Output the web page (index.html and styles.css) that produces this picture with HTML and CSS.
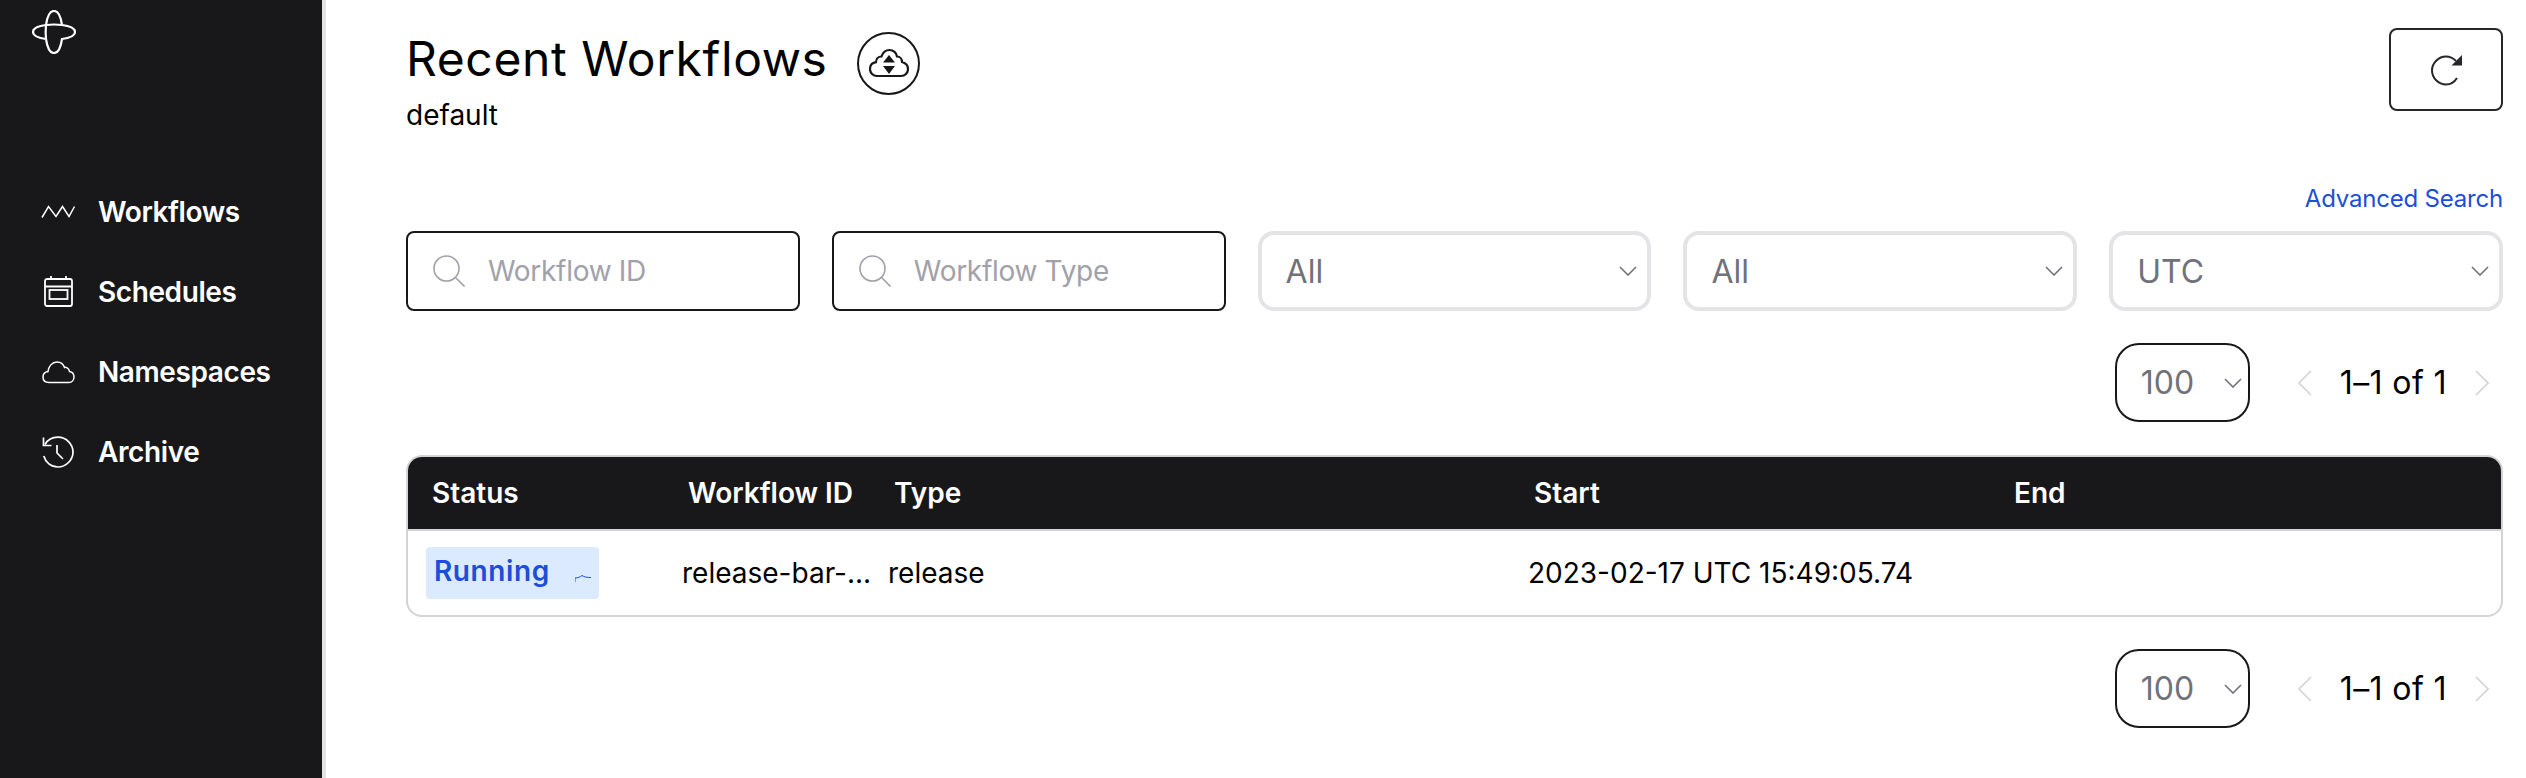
FILE: index.html
```html
<!doctype html>
<html lang="en">
    <head>
        <meta charset="utf-8" />
        <title>Recent Workflows</title>
        <link rel="stylesheet" href="styles.css">
    </head>
    <body>
        <svg class="sprites" width="0" height="0">
            <symbol id="chevron-down" viewBox="0 0 18 10">
                <path d="M1 1l8 8 8-8" fill="none" stroke="currentColor" stroke-width="1.6" />
            </symbol>
            <symbol id="search" viewBox="0 0 32 32">
                <circle cx="13.5" cy="13.5" r="12.5" fill="none" stroke="currentColor" stroke-width="1.6" />
                <path d="M22.5 22.5l9 9" fill="none" stroke="currentColor" stroke-width="1.6" />
            </symbol>
        </svg>

        <div class="app">
            <nav class="sidebar">
                <svg class="sidebar__logo" viewBox="32 10 44 44" fill="none" stroke="#fff" stroke-width="2.2">
                    <path d="M54 11C59 11 61 18 62 25C70 26 75 28 75 32C75 36 70 38 62 39C61 46 59 53 54 53C49 53 47 46 46 39C38 38 33 36 33 32C33 28 38 26 46 25C47 18 49 11 54 11Z" />
                    <path d="M46 39C45.5 34 45.5 30 46 25C51 24.4 57 24.4 62 25" />
                </svg>
                <ul class="sidebar__menu">
                    <li class="sidebar__item">
                        <svg class="sidebar__icon" viewBox="0 0 32 32" fill="none" stroke="#fff" stroke-width="1.5">
                            <path d="M0 21.5L6.5 10.5L14 20.5L20.5 10.5L27 20.5L32.5 10.5" />
                        </svg>
                        Workflows
                    </li>
                    <li class="sidebar__item">
                        <svg class="sidebar__icon" viewBox="0 0 32 32" fill="none" stroke="#fff" stroke-width="1.8">
                            <rect x="3" y="3" width="27" height="27" rx="2" />
                            <rect x="7.500" y="14" width="18" height="9" />
                            <path d="M3 10.500H30M9 0V3M24 0V3" />
                        </svg>
                        Schedules
                    </li>
                    <li class="sidebar__item">
                        <svg class="sidebar__icon" viewBox="0 0 32 32" fill="none" stroke="#fff" stroke-width="1.5">
                            <path d="M7 26.500C3 26.500 1 24 1 21C1 18 3 16 6 15.500C6.500 10.500 10 6 15 6C19 6 21.500 8.500 22.500 11.500C23.500 11 27 11.500 27.500 15.500C30 16 32 18 32 21C32 24 30 26.500 27 26.500Z" />
                        </svg>
                        Namespaces
                    </li>
                    <li class="sidebar__item">
                        <svg class="sidebar__icon" viewBox="0 0 32 32" fill="none" stroke="#fff" stroke-width="1.7">
                            <path d="M3 8.500C5.500 4 10 1.200 16 1.200C24 1.200 31 8 31 16C31 24 24 31 16 31C9 31 3.500 26.500 1.800 20" />
                            <path d="M1.500 1.500V9.500H9.500M15 9V17L21 23" />
                        </svg>
                        Archive
                    </li>
                </ul>
            </nav>

            <main class="content">
                <header class="page-header">
                    <div>
                        <div class="page-header__title">
                            <h1>Recent Workflows</h1>
                            <span class="cloud-button">
                                <svg viewBox="0 0 40 30" width="40" height="30" fill="none" stroke="#18181b" stroke-width="2.2">
                                    <path d="M8 28C4 28 1 25 1 21C1 17.500 3.500 14.800 7 14.200C7 10.500 9.500 8.500 12.500 8.500C14 4 17 2 20.500 2C24.500 2 27.500 5 28 8.500C31 8.500 33 11 33 14C36.500 15 39 17.500 39 21C39 25 36 28 32 28Z" />
                                    <path d="M20 7L26 14.500H14ZM20 26L26 18H14Z" fill="#18181b" stroke="none" />
                                </svg>
                            </span>
                        </div>
                        <p class="page-header__namespace">default</p>
                    </div>
                    <span class="refresh-button">
                        <svg viewBox="0 0 32 32" width="32" height="32" fill="none" stroke="#27272a" stroke-width="2">
                            <path d="M27 24C24.500 28 20.500 30.500 16 30.500C8.500 30.500 2 24 2 16.500C2 9 8.500 2.500 16 2.500C20 2.500 23.500 4.500 26 7" />
                            <path d="M32 1V11.500H21.500Z" fill="#27272a" stroke="none" />
                        </svg>
                    </span>
                </header>

                <div class="advanced-link">Advanced Search</div>

                <div class="filters">
                    <label class="search-box">
                        <svg class="search-box__icon"><use href="#search" /></svg>
                        <input class="search-box__input" placeholder="Workflow ID" />
                    </label>
                    <label class="search-box">
                        <svg class="search-box__icon"><use href="#search" /></svg>
                        <input class="search-box__input" placeholder="Workflow Type" />
                    </label>
                    <div class="select-box">All<svg class="chevron"><use href="#chevron-down" /></svg></div>
                    <div class="select-box">All<svg class="chevron"><use href="#chevron-down" /></svg></div>
                    <div class="select-box">UTC<svg class="chevron"><use href="#chevron-down" /></svg></div>
                </div>

                <div class="pagination">
                    <div class="page-size">100<svg class="chevron"><use href="#chevron-down" /></svg></div>
                    <svg class="page-arrow" viewBox="0 0 14 26"><path d="M13 1L1 13l12 12" /></svg>
                    <span class="page-label">1–1 of 1</span>
                    <svg class="page-arrow" viewBox="0 0 14 26"><path d="M1 1l12 12L1 25" /></svg>
                </div>

                <table class="workflow-table">
                    <colgroup>
                        <col class="col-status" />
                        <col class="col-id" />
                        <col class="col-type" />
                        <col class="col-start" />
                        <col />
                    </colgroup>
                    <thead>
                        <tr>
                            <th>Status</th>
                            <th>Workflow ID</th>
                            <th>Type</th>
                            <th>Start</th>
                            <th>End</th>
                        </tr>
                    </thead>
                    <tbody>
                        <tr>
                            <td>
                                <span class="status-badge">
                                    Running
                                    <svg class="status-badge__icon" viewBox="0 0 16 8" fill="none" stroke="#1d4ed8" stroke-width="1">
                                        <path d="M0 8V4C3 4 5 3 7 1.500C9 3 12 3.500 16 3.500" />
                                    </svg>
                                </span>
                            </td>
                            <td>release-bar-...</td>
                            <td>release</td>
                            <td>2023-02-17 UTC 15:49:05.74</td>
                            <td></td>
                        </tr>
                    </tbody>
                </table>

                <div class="pagination pagination--bottom">
                    <div class="page-size">100<svg class="chevron"><use href="#chevron-down" /></svg></div>
                    <svg class="page-arrow" viewBox="0 0 14 26"><path d="M13 1L1 13l12 12" /></svg>
                    <span class="page-label">1–1 of 1</span>
                    <svg class="page-arrow" viewBox="0 0 14 26"><path d="M1 1l12 12L1 25" /></svg>
                </div>
            </main>
        </div>
    </body>
</html>
```

FILE: styles.css
```css
* {
    box-sizing: border-box;
}

html,
body {
    margin: 0;
    height: 778px;
    overflow: hidden;
    background: #fff;
    font-family: Inter, 'Liberation Sans', sans-serif;
    color: #18181b;
}

.sprites {
    position: absolute;
}

.app {
    display: flex;
    height: 778px;
}

.sidebar {
    flex: 0 0 326px;
    background: #18181b;
    border-right: 4px solid #e4e4e7;
    color: #fff;
}

.sidebar__logo {
    display: block;
    width: 44px;
    height: 44px;
    margin: 10px 0 0 32px;
}

.sidebar__menu {
    list-style: none;
    margin: 118px 0 0;
    padding: 0;
}

.sidebar__item {
    display: flex;
    align-items: center;
    height: 80px;
    padding-left: 42px;
    gap: 24px;
    font-size: 28px;
    font-weight: 600;
    letter-spacing: -0.4px;
}

.sidebar__icon {
    flex: none;
    width: 32px;
    height: 32px;
    overflow: visible;
}

.content {
    flex: 1;
    min-width: 0;
    padding: 24px 23px 0 80px;
}

.page-header {
    display: flex;
    justify-content: space-between;
    align-items: flex-start;
}

.page-header__title {
    display: flex;
    align-items: center;
    gap: 30px;
    height: 70px;
}

.page-header__title h1 {
    margin: 0;
    font-size: 48px;
    font-weight: 400;
    line-height: 70px;
    letter-spacing: 0.6px;
    color: #000;
}

.page-header__namespace {
    margin: 3px 0 0;
    font-size: 28px;
    line-height: 36px;
    color: #000;
}

.cloud-button {
    display: flex;
    align-items: center;
    justify-content: center;
    width: 63px;
    height: 63px;
    margin-top: 8px;
    border: 2px solid #18181b;
    border-radius: 50%;
}

.refresh-button {
    display: flex;
    align-items: center;
    justify-content: center;
    width: 114px;
    height: 83px;
    margin-top: 4px;
    border: 2px solid #27272a;
    border-radius: 8px;
}

.advanced-link {
    margin-top: 50px;
    text-align: right;
    font-size: 24px;
    line-height: 32px;
    letter-spacing: -0.2px;
    color: #1d4ed8;
}

.filters {
    display: grid;
    grid-template-columns: repeat(5, minmax(0, 1fr));
    gap: 32px;
    margin-top: 16px;
}

.search-box {
    display: flex;
    align-items: center;
    gap: 23px;
    height: 80px;
    padding-left: 25px;
    border: 2px solid #18181b;
    border-radius: 8px;
    color: #a1a1aa;
}

.search-box__icon {
    flex: none;
    width: 32px;
    height: 32px;
}

.search-box__input {
    flex: 1;
    min-width: 0;
    border: 0;
    outline: 0;
    padding: 0;
    font-family: inherit;
    font-size: 28px;
    letter-spacing: -0.3px;
}

.search-box__input::placeholder {
    color: #a1a1aa;
    opacity: 1;
}

.select-box {
    display: flex;
    align-items: center;
    justify-content: space-between;
    height: 80px;
    padding: 0 10px 0 24px;
    border: 4px solid #e4e4e7;
    border-radius: 16px;
    font-size: 32px;
    color: #71717a;
}

.chevron {
    flex: none;
    width: 18px;
    height: 10px;
    color: #71717a;
}

.pagination {
    display: flex;
    justify-content: flex-end;
    align-items: center;
    margin-top: 32px;
    padding-right: 14px;
}

.pagination--bottom {
    margin-top: 32px;
}

.page-size {
    display: flex;
    align-items: center;
    justify-content: space-between;
    width: 135px;
    height: 79px;
    padding: 0 6px 0 24px;
    margin-right: 48px;
    border: 2.500px solid #18181b;
    border-radius: 24px;
    font-size: 32px;
    color: #71717a;
}

.page-arrow {
    width: 14px;
    height: 26px;
    fill: none;
    stroke: #d4d4d8;
    stroke-width: 1.6;
}

.page-label {
    margin: 0 28px;
    font-size: 32px;
    letter-spacing: 0.4px;
    color: #000;
}

.workflow-table {
    width: 100%;
    margin-top: 33px;
    table-layout: fixed;
    border-collapse: separate;
    border-spacing: 0;
    border: 2px solid #d4d4d8;
    border-radius: 16px;
    overflow: hidden;
    font-size: 28px;
}

.col-status {
    width: 256px;
}

.col-id {
    width: 206px;
}

.col-type {
    width: 640px;
}

.col-start {
    width: 480px;
}

.workflow-table th {
    height: 72px;
    padding: 0 0 0 24px;
    background: #18181b;
    color: #fff;
    font-weight: 600;
    text-align: left;
}

.workflow-table td {
    height: 86px;
    padding: 0 0 0 18px;
    border-top: 2px solid #d4d4d8;
    color: #000;
    white-space: nowrap;
}

.status-badge {
    display: flex;
    align-items: center;
    justify-content: space-between;
    width: 173px;
    height: 52px;
    padding: 0 8px 4px 8px;
    border-radius: 4px;
    background: #dbeafe;
    color: #1d4ed8;
    font-weight: 600;
    letter-spacing: 0.6px;
}

.status-badge__icon {
    width: 16px;
    height: 8px;
    margin-top: 14px;
}
```
